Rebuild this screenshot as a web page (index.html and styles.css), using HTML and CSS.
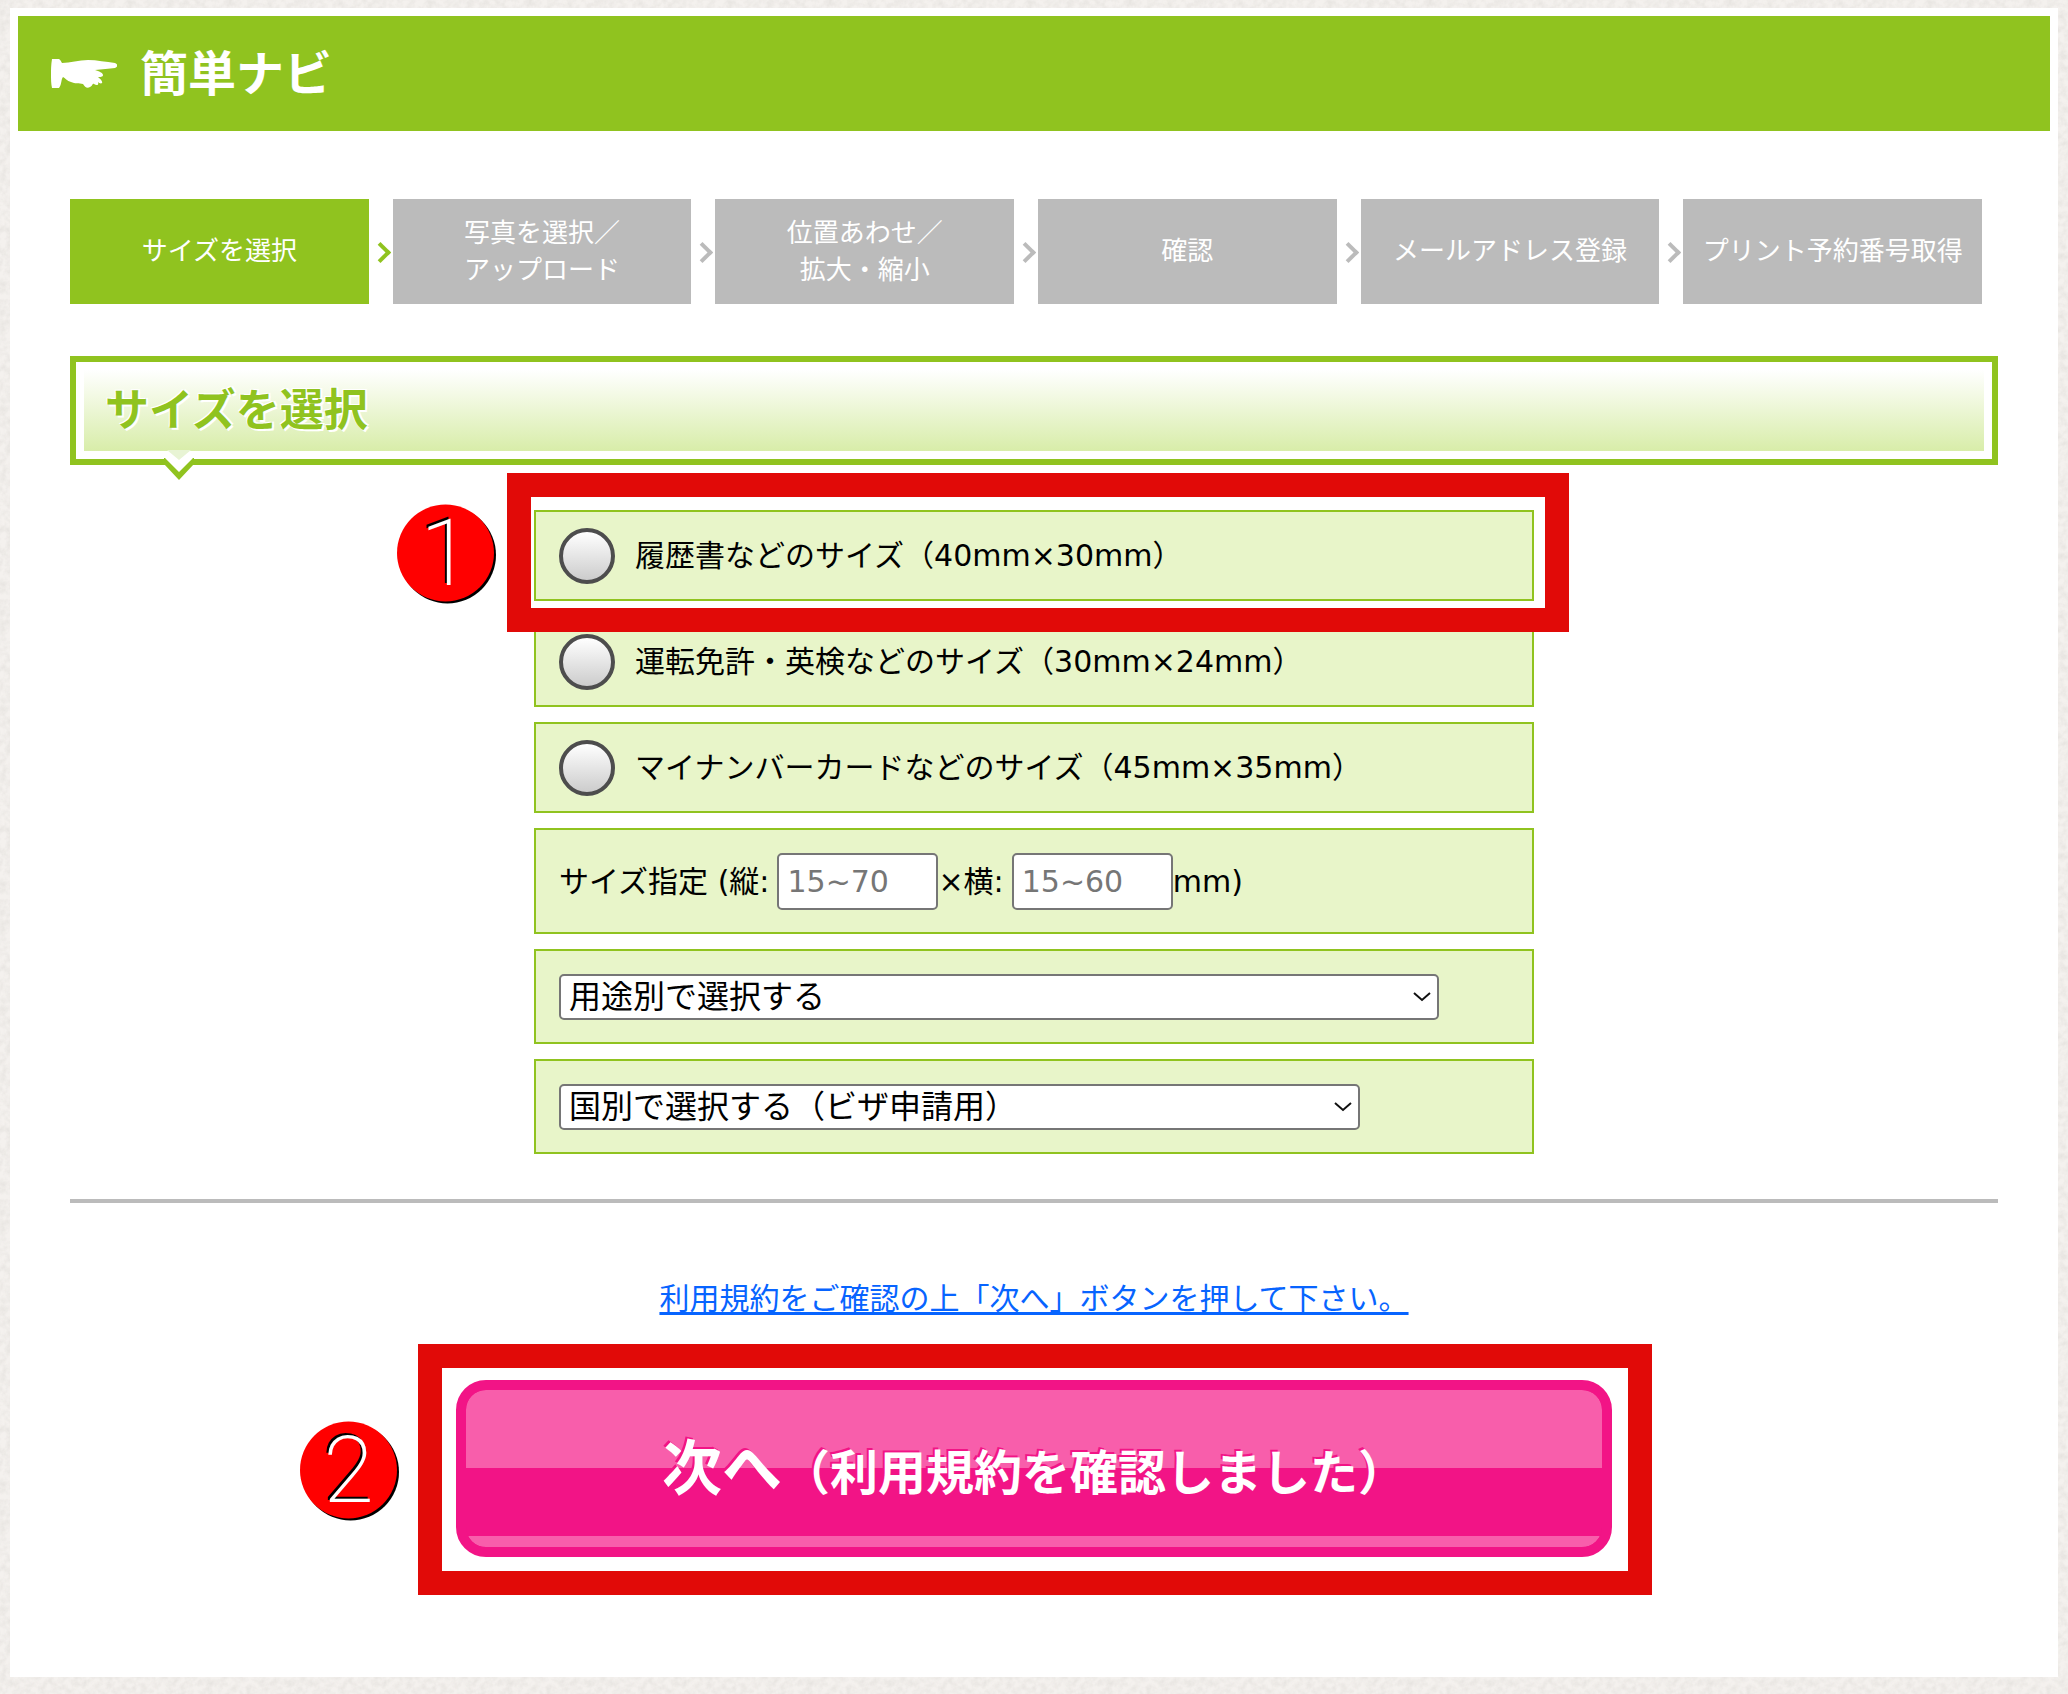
FILE: index.html
```html
<!DOCTYPE html>
<html lang="ja">
<head>
    <meta charset="UTF-8">
    <meta name="viewport" content="width=device-width, initial-scale=1.0">
    <title>簡単ナビ</title>
    <link rel="stylesheet" href="styles.css">
</head>
<body>
    <div class="panel">
        <header class="header">
            <svg class="hand" viewBox="0 0 66 30" aria-hidden="true">
                <path fill="#fff" d="M1 0 L8 0 C10 1 10 3 11 4 C19 4 28 1 37 1 C46 1 55 3 64 4 C67 5 67 8 64 9 C58 10 51 10 44 11 C48 12 52 14 52 16 C52 18 49 18 47 18 C49 20 52 22 51 24 C50 25 48 24 47 23 C48 26 46 27 43 25 C41 24 42 27 39 28 C36 30 34 28 32 25 C28 24 24 25 20 23 C16 22 14 19 12 18 C10 20 11 25 8 29 L1 29 C0 25 0 20 0 15 C0 11 0 6 1 0 Z"/>
            </svg>
            <h1>簡単ナビ</h1>
        </header>

        <main class="content">
            <ol class="steps">
                <li class="active">サイズを選択</li>
                <li>写真を選択／<br>アップロード</li>
                <li>位置あわせ／<br>拡大・縮小</li>
                <li>確認</li>
                <li>メールアドレス登録</li>
                <li>プリント予約番号取得</li>
            </ol>

            <div class="title">
                <h2>サイズを選択</h2>
                <svg class="tail" viewBox="0 0 30 30" aria-hidden="true">
                    <path fill="#fff" d="M0 7 L30 7 L30 9 L15 23 L0 9 Z"/>
                    <path fill="#e8f4d4" d="M3 0 L27 0 L15 10 Z"/>
                    <path fill="#90c31f" d="M0 8 L1 8 L15 22 L29 8 L30 8 L30 14 L15 30 L0 14 Z"/>
                </svg>
            </div>

            <form>
                <div class="sizes">
                    <div class="size">
                        <label><input type="radio" name="size">履歴書などのサイズ（40mm×30mm）</label>
                        <div class="mark mark1"><span class="num">1</span></div>
                    </div>
                    <div class="size">
                        <label><input type="radio" name="size">運転免許・英検などのサイズ（30mm×24mm）</label>
                    </div>
                    <div class="size">
                        <label><input type="radio" name="size">マイナンバーカードなどのサイズ（45mm×35mm）</label>
                    </div>
                    <div class="size custom">
                        <label for="height">サイズ指定 (縦:</label>
                        <input type="text" id="height" placeholder="15~70">
                        <label for="width">×横:</label>
                        <input type="text" id="width" placeholder="15~60">
                        <span>mm)</span>
                    </div>
                    <div class="size choose">
                        <select class="purpose" aria-label="用途別">
                            <option>用途別で選択する</option>
                        </select>
                    </div>
                    <div class="size choose">
                        <select class="country" aria-label="国別">
                            <option>国別で選択する（ビザ申請用）</option>
                        </select>
                    </div>
                </div>

                <hr>

                <p class="terms"><a href="#">利用規約をご確認の上「次へ」ボタンを押して下さい。</a></p>

                <div class="submit">
                    <button type="submit"><span class="big">次へ</span>（利用規約を確認しました）</button>
                    <div class="mark mark2"><span class="num">2</span></div>
                </div>
            </form>
        </main>
    </div>
</body>
</html>
```
FILE: styles.css
```css
*, *::after{
    box-sizing: border-box;
}

body{
    margin: 0;
    padding: 8px 10px 16px;

    background-color: #f4f1ee;
    /* paper texture */
    background-image: url("data:image/svg+xml,%3Csvg xmlns='http://www.w3.org/2000/svg' width='300' height='300'%3E%3Cfilter id='n' x='0' y='0' width='100%25' height='100%25'%3E%3CfeTurbulence type='fractalNoise' baseFrequency='.15' numOctaves='3' stitchTiles='stitch'/%3E%3CfeColorMatrix values='0 0 0 0 .7 0 0 0 0 .68 0 0 0 0 .65 .9 0 0 0 -.3'/%3E%3C/filter%3E%3Crect width='300' height='300' filter='url(%23n)'/%3E%3C/svg%3E");

    color: #000;
    font-size: 30px;
    font-family: "DejaVu Sans", "Noto Sans CJK JP", sans-serif;
}

h1, h2, p{
    margin: 0;
}

.panel{
    padding: 8px 8px 120px;

    background: #fff;
}

.header{
    display: flex;
    align-items: center;
    gap: 23px;

    height: 115px;
    padding: 0 33px;

    background: #90c31f;
    color: #fff;
}
.header h1{
    font-size: 48px;
    line-height: 72px;
}

.hand{
    width: 66px;
    height: 30px;
}

.content{
    padding: 68px 52px 0;
}

.steps{
    display: flex;
    gap: 24px;

    margin: 0 0 52px;
    padding: 0 16px 0 0;

    list-style: none;
}
.steps li{
    position: relative;
    flex: 1 1 0;

    display: flex;
    align-items: center;
    justify-content: center;

    height: 105px;

    background: #bbb;

    color: #fff;
    font-size: 26px;
    line-height: 37px;
    text-align: center;
    white-space: nowrap;
}
.steps li.active{
    background: #90c31f;
}
/* arrow between two steps */
.steps li:not(:last-child)::after{
    content: "";

    position: absolute;
    top: 46px;
    right: -19px;

    width: 15px;
    height: 15px;

    border: solid #bbb;
    border-width: 4px 4px 0 0;

    transform: rotate(45deg);
}
.steps li.active::after{
    border-color: #90c31f;
}

.title{
    position: relative;

    margin-bottom: 45px;
    padding: 8px;

    border: 6px solid #90c31f;
}
.title h2{
    padding: 0 21px;

    background: linear-gradient(#fff, #d8eda9);

    color: #90c31f;
    font-size: 44px;
    line-height: 81px;
    text-shadow: 2px 2px 0 #fff, -1px -1px 0 #fff, 2px -1px 0 #fff;
}

.tail{
    position: absolute;
    left: 88px;
    bottom: -21px;

    width: 30px;
    height: 30px;
}

.sizes{
    display: flex;
    flex-direction: column;
    gap: 15px;

    max-width: 1000px;
    margin: 0 auto;
}

.size{
    position: relative;

    display: flex;
    align-items: center;

    min-height: 91px;
    padding: 0 23px;

    border: 2px solid #90c31f;

    background: #e8f5c9;

    line-height: 45px;
}
.size label{
    display: flex;
    align-items: center;
}

input[type="radio"]{
    appearance: none;

    width: 56px;
    height: 56px;
    margin: 0 20px 0 0;

    border: 4px solid #4d4d4d;
    border-radius: 50%;

    background: linear-gradient(#fff, #ccc);
}

.custom{
    min-height: 106px;
}
.custom input{
    width: 161px;
    height: 57px;
    margin: 0 0 0 8px;
    padding: 0 8px;

    border: 2px solid #767676;
    border-radius: 5px;

    background: #fff;

    font: inherit;
}
.custom input::placeholder{
    color: #767676;
}

.choose{
    min-height: 95px;
}
.choose select{
    appearance: none;

    max-width: 100%;
    height: 46px;
    padding: 0 40px 0 8px;

    border: 2px solid #767676;
    border-radius: 5px;

    background: #fff url("data:image/svg+xml,%3Csvg xmlns='http://www.w3.org/2000/svg' width='18' height='10' fill='none' stroke='%23111' stroke-width='2'%3E%3Cpath d='M1 1l8 7 8-7'/%3E%3C/svg%3E") no-repeat right 6px center;

    color: #000;
    font-family: inherit;
    font-size: 32px;
    line-height: 42px;
}
.choose .purpose{
    width: 880px;
}
.choose .country{
    width: 801px;
}

hr{
    height: 4px;
    margin: 45px 0 73px;

    border: 0;

    background: #bbb;
}

.terms{
    margin-bottom: 59px;

    line-height: 45px;
    text-align: center;
}
.terms a{
    color: #0764ff;
    text-decoration-thickness: 3px;
    text-underline-offset: 3px;
    text-decoration-skip-ink: none;
}

.submit{
    position: relative;

    max-width: 1156px;
    margin: 0 auto;
}
.submit button{
    display: block;

    width: 100%;
    height: 177px;
    padding: 0 0 10px;

    border: 10px solid #f21486;
    border-radius: 30px;

    background: linear-gradient(#f85eab 50%, #f21486 50%, #f21486 93%, #f85eab 93%) padding-box, #f21486;

    color: #fff;
    font-family: inherit;
    font-size: 48px;
    font-weight: bold;
    text-shadow: -2px -2px 0 #f21486;
}
.submit .big{
    font-size: 60px;
}

/* red frames with a number, laid over the form */
.mark{
    position: absolute;
    z-index: 1;

    border: 24px solid #e10a08;

    pointer-events: none;
}
.mark1{
    inset: -39px -37px -33px -29px;
}
.mark2{
    inset: -36px -40px -38px -38px;
}

.num{
    position: absolute;
    top: 50%;
    right: calc(100% + 37px);

    width: 97px;
    height: 97px;

    border-radius: 50%;

    background: #f00;
    box-shadow: 2px 2px 0 #000;

    color: #fff;
    font-family: Roboto, sans-serif;
    font-size: 92px;
    font-weight: 200;
    line-height: 97px;
    text-align: center;
    text-shadow: -2px -2px 0 #000;

    transform: translateY(-50%);
}
.mark2 .num{
    right: calc(100% + 45px);
}
```
